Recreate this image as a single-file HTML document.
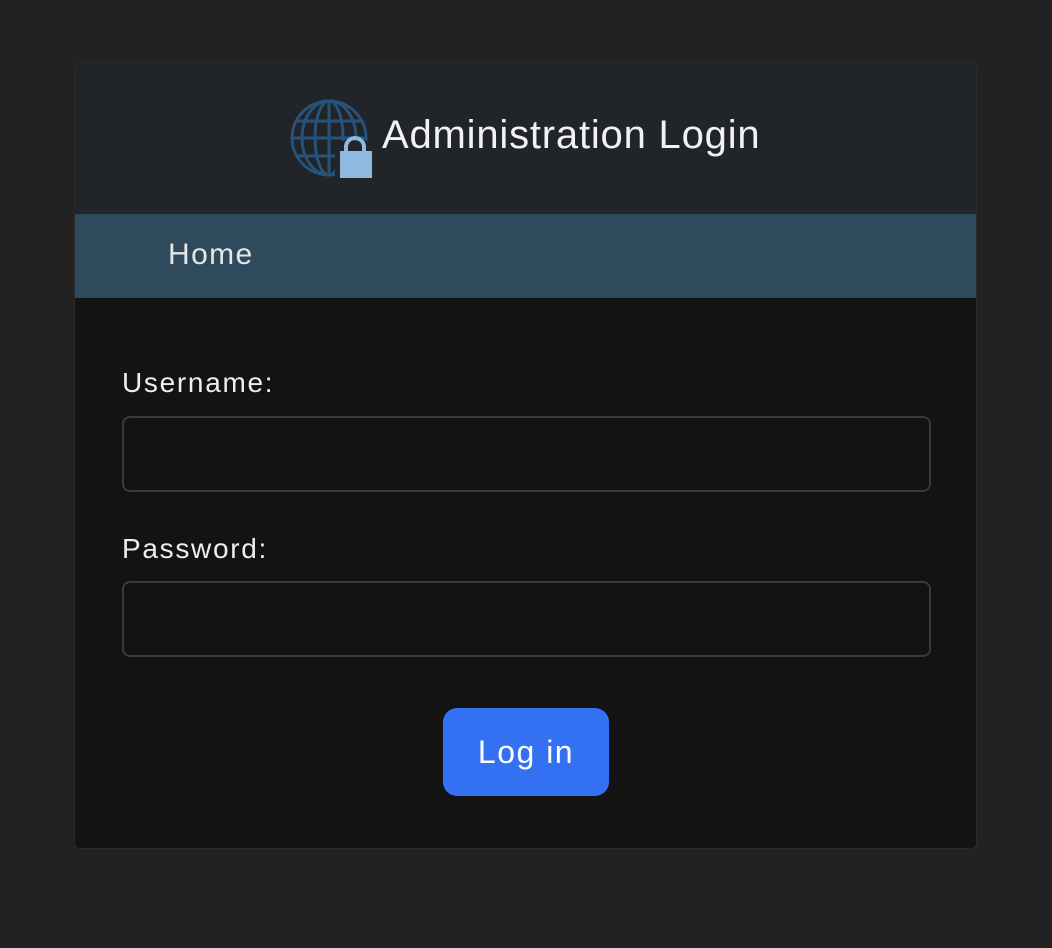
<!DOCTYPE html>
<html><head><meta charset="utf-8"><style>
*{box-sizing:border-box;margin:0;padding:0}
body{width:1052px;height:948px;background:#222222;font-family:"Liberation Sans",sans-serif;position:relative;overflow:hidden}
.card{position:absolute;left:74px;top:62px;width:903px;height:787px;background:#131313;border:1px solid #2a2a2a;border-radius:6px;overflow:hidden}
.hdr{position:absolute;left:0;top:0;width:100%;height:151px;background:#212429}
.title{position:absolute;left:307px;top:50px;font-size:40px;color:#f2f2f2;letter-spacing:0.8px}
.nav{position:absolute;left:0;top:151px;width:100%;height:84px;background:#2e4a5c}
.nav span{position:absolute;left:93px;top:24px;font-size:30px;color:#e6e6e6;letter-spacing:1.4px}
.lbl{position:absolute;left:47px;font-size:28px;color:#eeeeee;letter-spacing:1.7px}
.inp{position:absolute;left:47px;width:809px;height:76px;border:2px solid #3a3a3a;border-radius:8px;background:#131313}
.btn{position:absolute;left:368px;top:645px;width:166px;height:88px;background:#3370f2;border-radius:14px;color:#fff;font-size:32px;text-align:center;line-height:88px;letter-spacing:1.5px}
</style></head><body>
<div class="card">
<div class="hdr">
<svg style="position:absolute;left:214px;top:36px" width="84" height="82" viewBox="0 0 84 82">
<g fill="none" stroke="#27527a" stroke-width="3">
<circle cx="40" cy="39" r="37"/>
<ellipse cx="40" cy="39" rx="14" ry="37"/>
<ellipse cx="40" cy="39" rx="27" ry="37"/>
<line x1="40" y1="2" x2="40" y2="76"/>
<line x1="3" y1="39" x2="77" y2="39"/>
<line x1="8" y1="22" x2="72" y2="22"/>
<line x1="8" y1="57" x2="72" y2="57"/>
</g>
<rect x="46" y="42" width="38" height="40" fill="#212429"/>
<path d="M57 54 V48 a9 9 0 0 1 18 0 V54" fill="none" stroke="#8fb9de" stroke-width="4"/>
<rect x="51" y="52" width="32" height="27" fill="#8fb9de"/>
</svg>
<div class="title">Administration Login</div>
</div>
<div class="nav"><span>Home</span></div>
<div class="lbl" style="top:304px">Username:</div>
<div class="inp" style="top:353px"></div>
<div class="lbl" style="top:470px">Password:</div>
<div class="inp" style="top:518px"></div>
<div class="btn">Log in</div>
</div>
</body></html>
